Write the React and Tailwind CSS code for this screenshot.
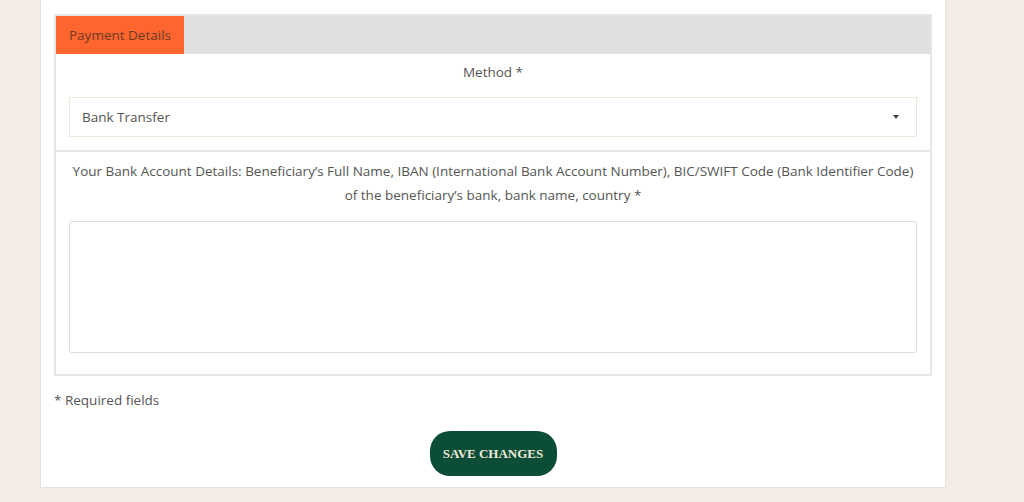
import React from 'react';

export default function App() {
  return (
    <div
      className="min-h-[502px] bg-[#f3ebe5] pl-[40px]"
      style={{ fontFamily: '"Open Sans", sans-serif' }}
    >
      <div className="w-[906px] bg-white border-x border-b border-[#e4e0dc] px-[13px] pb-[11px]">
        <div className="h-[14px]" />
        <div className="border-2 border-[#e6e6e6]">
          <div className="flex h-[38px] bg-[#e0e0e0]">
            <div className="flex items-center bg-[#ff662f] px-[13px] text-[13.5px] text-[#6e3a24]">
              Payment Details
            </div>
          </div>

          <div className="px-[13px] pt-[6px] pb-[13px] border-b-2 border-[#e6e6e6]">
            <p className="text-center text-[13.5px] leading-[24px] text-[#555]">Method *</p>
            <div className="mt-[13px] flex h-[40px] items-center justify-between border border-[#efe5d8] px-[12px] text-[13.5px] text-[#555]">
              <span>Bank Transfer</span>
              <span className="mr-[5px] h-0 w-0 border-x-[3px] border-t-[4px] border-x-transparent border-t-[#444]" />
            </div>
          </div>

          <div className="px-[13px] pt-[7px] pb-[21px]">
            <p className="text-center text-[13.5px] leading-[24px] text-[#555]">
              Your Bank Account Details: Beneficiary’s Full Name, IBAN (International Bank Account Number), BIC/SWIFT Code (Bank Identifier Code) of the beneficiary’s bank, bank name, country *
            </p>
            <textarea className="mt-[14px] block h-[132px] w-full resize-none rounded-[3px] border border-[#dcdcdc] bg-white" />
          </div>
        </div>

        <p className="mt-[12px] text-[13.5px] leading-[24px] text-[#555]">* Required fields</p>

        <div className="mt-[19px] flex justify-center">
          <button
            className="h-[45px] w-[127px] rounded-[20px] bg-[#0b4d37] text-[13px] font-bold uppercase text-[#f1ead9]"
            style={{ fontFamily: '"Liberation Serif", serif' }}
          >
            Save Changes
          </button>
        </div>
      </div>
    </div>
  );
}
